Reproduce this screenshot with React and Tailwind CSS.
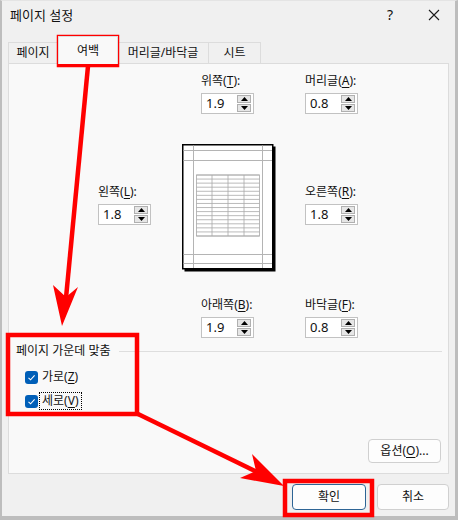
import React from "react";

function Acc({ k }) {
  return (
    <span>
      (<span className="underline underline-offset-2">{k}</span>)
    </span>
  );
}

function Tri({ up }) {
  return (
    <svg width="7" height="4" viewBox="0 0 7 4">
      {up ? <polygon points="3.5,0 7,4 0,4" fill="#000" /> : <polygon points="0,0 7,0 3.5,4" fill="#000" />}
    </svg>
  );
}

function Spin({ label, k, value }) {
  return (
    <div className="flex flex-col">
      <div className="mb-[4px] h-[16px] whitespace-nowrap text-[12px] leading-[16px] text-[#111]">
        {label}
        <Acc k={k} />:
      </div>
      <div className="flex h-[21px] w-[53px] items-center border border-[#c2c2c2] bg-white">
        <span className="flex-1 pl-[4px] text-[13px] leading-[19px] text-[#111]">{value}</span>
        <div className="mr-[2px] flex w-[14px] flex-col gap-[1px]">
          <div className="flex h-[8px] items-center justify-center border border-[#b0b0b0] bg-[#e6e6e6]">
            <Tri up />
          </div>
          <div className="flex h-[8px] items-center justify-center border border-[#b0b0b0] bg-[#e6e6e6]">
            <Tri />
          </div>
        </div>
      </div>
    </div>
  );
}

function Preview() {
  const rows = [];
  for (let i = 0; i <= 15; i++) rows.push(31 + (61 * i) / 15);
  return (
    <svg width="94" height="128" viewBox="0 0 94 128" className="block">
      <rect x="2.5" y="2.5" width="91" height="125" fill="#000" />
      <rect x="0.75" y="0.75" width="90" height="124" fill="#fff" stroke="#000" strokeWidth="1.5" />
      <g stroke="#b4b4b4" strokeWidth="1">
        <line x1="11.5" y1="1.5" x2="11.5" y2="124" />
        <line x1="80.5" y1="1.5" x2="80.5" y2="124" />
        <line x1="1.5" y1="6.5" x2="90" y2="6.5" />
        <line x1="1.5" y1="16.5" x2="90" y2="16.5" />
        <line x1="1.5" y1="110.5" x2="90" y2="110.5" />
        <line x1="1.5" y1="119.5" x2="90" y2="119.5" />
      </g>
      <g stroke="#a8a8a8" strokeWidth="0.8" fill="none">
        <rect x="14.5" y="31" width="63" height="61" />
        {[30, 46, 62].map((x) => (
          <line key={x} x1={x} y1="31" x2={x} y2="92" />
        ))}
        {rows.map((y, i) => (
          <line key={i} x1="14.5" y1={y} x2="77.5" y2={y} />
        ))}
      </g>
    </svg>
  );
}

function Check({ label, k, focus }) {
  return (
    <div className="flex h-[20px] items-center">
      <div className="flex h-[13px] w-[13px] items-center justify-center rounded-[3px] bg-[#005fb8]">
        <svg width="9" height="9" viewBox="0 0 9 9">
          <path d="M1.5 4.8 L3.6 6.8 L7.6 2.4" fill="none" stroke="#fff" strokeWidth="1.1" />
        </svg>
      </div>
      <div
        className={
          "ml-[2px] px-[2px] text-[12px] leading-[16px] text-[#111] " +
          (focus ? "outline outline-1 outline-dotted outline-black" : "")
        }
      >
        {label}
        <Acc k={k} />
      </div>
    </div>
  );
}

function Btn({ children, w, h, primary }) {
  return (
    <div
      className={
        "flex items-center justify-center rounded-[4px] bg-[#fdfdfd] text-[12px] text-[#111] " +
        (primary ? "border border-[#2d6495]" : "border border-[#d0d0d0]")
      }
      style={{ width: w, height: h }}
    >
      {children}
    </div>
  );
}

export default function App() {
  return (
    <div className="relative h-[520px] w-[458px] font-['Noto_Sans','Noto_Sans_CJK_KR',sans-serif]">
      <div className="flex h-[520px] w-[458px] flex-col border-b-4 border-l-2 border-r-[3px] border-t border-b-[#bdbdbd] border-l-[#bdbdbd] border-r-[#bdbdbd] border-t-[#e4e4e4] bg-[#f0f0f0]">
        {/* title bar */}
        <div className="flex h-[34px] items-start pt-[5px]">
          <div className="pl-[8px] text-[13px] leading-[18px] text-[#111]">페이지 설정</div>
          <div className="ml-auto mr-[31px] w-[14px] text-center text-[14px] leading-[18px] text-[#111]">?</div>
          <div className="mr-[15px] mt-[3px]">
            <svg width="12" height="12" viewBox="0 0 12 12">
              <path d="M1 1 L11 11 M11 1 L1 11" stroke="#1a1a1a" strokeWidth="1.1" />
            </svg>
          </div>
        </div>
        {/* tabs */}
        <div className="flex h-[28px] items-end pl-[6px]">
          <div className="flex h-[21px] w-[50px] items-center justify-center border border-b-0 border-[#dcdcdc] bg-[#f0f0f0] text-[12px] text-[#111]">
            페이지
          </div>
          <div className="relative z-10 -mb-[1px] flex h-[28px] w-[60px] items-center justify-center border border-b-0 border-[#dcdcdc] bg-[#f9f9f9] text-[12px] text-[#111]">
            여백
          </div>
          <div className="flex h-[21px] w-[91px] items-center justify-center border border-b-0 border-l-0 border-[#dcdcdc] bg-[#f0f0f0] text-[12px] text-[#111]">
            머리글/바닥글
          </div>
          <div className="flex h-[21px] w-[52px] items-center justify-center border border-b-0 border-l-0 border-[#dcdcdc] bg-[#f0f0f0] text-[12px] text-[#111]">
            시트
          </div>
        </div>
        {/* panel */}
        <div className="ml-[6px] flex h-[411px] w-[441px] flex-col border border-[#dcdcdc] bg-[#f9f9f9]">
          <div className="flex gap-[51px] pl-[192px] pt-[9px]">
            <Spin label="위쪽" k="T" value="1.9" />
            <Spin label="머리글" k="A" value="0.8" />
          </div>
          <div className="mt-[30px] flex items-start pl-[89px]">
            <div className="mt-[40px]">
              <Spin label="왼쪽" k="L" value="1.8" />
            </div>
            <div className="ml-[31px]">
              <Preview />
            </div>
            <div className="ml-[29px] mt-[40px]">
              <Spin label="오른쪽" k="R" value="1.8" />
            </div>
          </div>
          <div className="mt-[25px] flex gap-[51px] pl-[192px]">
            <Spin label="아래쪽" k="B" value="1.9" />
            <Spin label="바닥글" k="F" value="0.8" />
          </div>
          <div className="mt-[5px] flex h-[16px] items-center pl-[7px] pr-[6px]">
            <span className="text-[12px] leading-[16px] text-[#111]">페이지 가운데 맞춤</span>
            <div className="ml-[8px] h-px flex-1 bg-[#dedede]" />
          </div>
          <div className="mt-[8px] flex flex-col gap-[4px] pl-[16px]">
            <Check label="가로" k="Z" />
            <Check label="세로" k="V" focus />
          </div>
          <div className="mt-auto mb-[10px] mr-[7px] flex justify-end">
            <Btn w={73} h={24}>
              옵션(<span className="underline underline-offset-2">O</span>)...
            </Btn>
          </div>
        </div>
        {/* bottom buttons */}
        <div className="mt-[10px] flex justify-end gap-[11px] pr-[6px]">
          <Btn w={74} h={26} primary>
            확인
          </Btn>
          <Btn w={72} h={26}>
            취소
          </Btn>
        </div>
      </div>
      {/* annotations overlay */}
      <svg className="pointer-events-none absolute left-0 top-0" width="458" height="520" viewBox="0 0 458 520">
        <g fill="none" stroke="#ff0000" strokeWidth="4.5">
          <rect x="59" y="37" width="58" height="28" />
          <rect x="8" y="335" width="129" height="79" />
          <rect x="285" y="481" width="87" height="34" />
          <line x1="88" y1="66" x2="66" y2="298" />
          <line x1="138" y1="414" x2="257" y2="472" />
        </g>
        <polygon points="62,326 53,285 66,297 78,287" fill="#ff0000" />
        <polygon points="284,486 240,478 256,471 252,454" fill="#ff0000" />
      </svg>
    </div>
  );
}
